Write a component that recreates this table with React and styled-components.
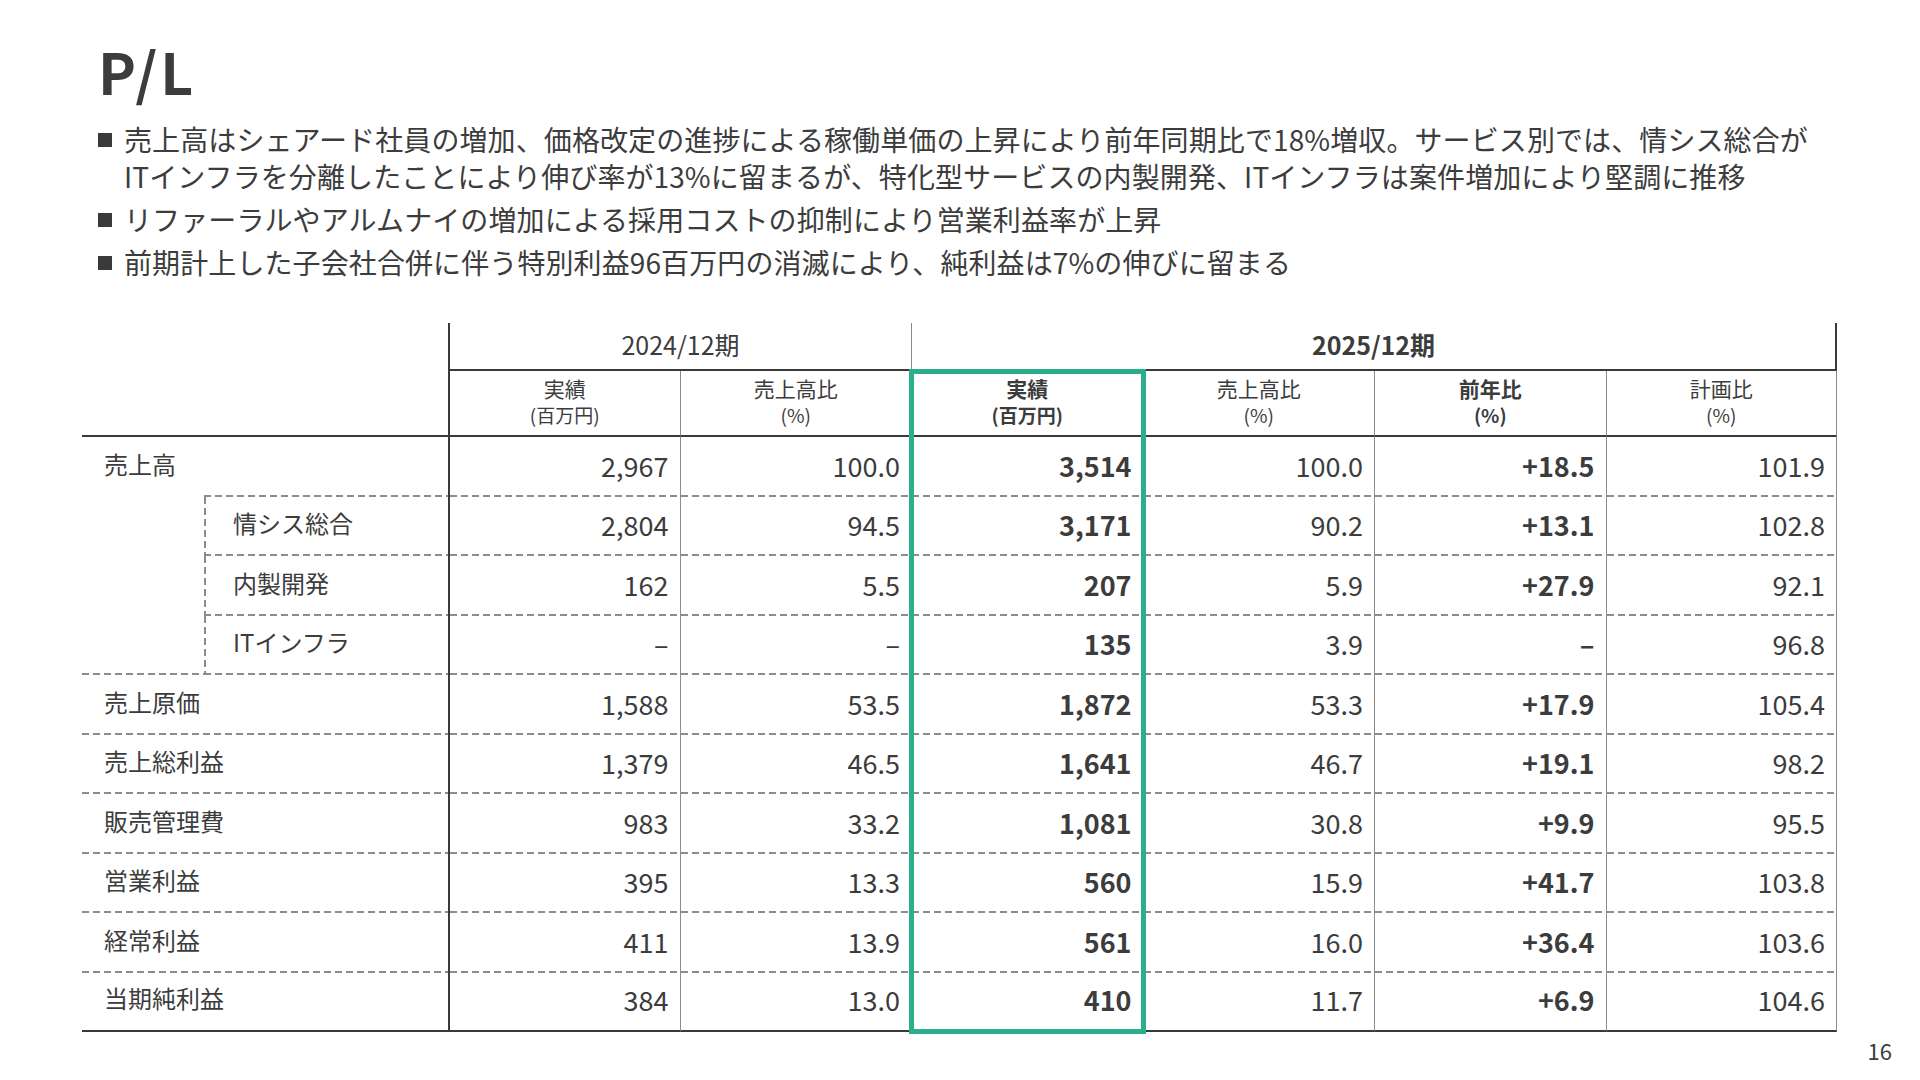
import React from 'react';
import styled, { createGlobalStyle } from 'styled-components';

const DARK = '#3a3a3a';
const GRAY = '#8c8c8c';
const GREEN = '#2bae8c';
const TEXT = '#3c3c3c';

const GlobalStyle = createGlobalStyle`
    html, body {
        margin: 0;
        padding: 0;
        background: #fff;
    }
    body {
        font-family: "Noto Sans CJK JP", "Noto Sans", sans-serif;
        color: ${TEXT};
    }
`;

const bullets = [
    ['売上高はシェアード社員の増加、価格改定の進捗による稼働単価の上昇により前年同期比で18%増収。サービス別では、情シス総合が',
        'ITインフラを分離したことにより伸び率が13%に留まるが、特化型サービスの内製開発、ITインフラは案件増加により堅調に推移'],
    ['リファーラルやアルムナイの増加による採用コストの抑制により営業利益率が上昇'],
    ['前期計上した子会社合併に伴う特別利益96百万円の消滅により、純利益は7%の伸びに留まる'],
];

const headers = [
    { top: '実績', sub: '(百万円)' },
    { top: '売上高比', sub: '(%)' },
    { top: '実績', sub: '(百万円)', bold: true },
    { top: '売上高比', sub: '(%)' },
    { top: '前年比', sub: '(%)', bold: true },
    { top: '計画比', sub: '(%)' },
];

const rows = [
    { label: '売上高', values: ['2,967', '100.0', '3,514', '100.0', '+18.5', '101.9'], parent: true },
    { label: '情シス総合', values: ['2,804', '94.5', '3,171', '90.2', '+13.1', '102.8'], child: true },
    { label: '内製開発', values: ['162', '5.5', '207', '5.9', '+27.9', '92.1'], child: true },
    { label: 'ITインフラ', values: ['–', '–', '135', '3.9', '–', '96.8'], child: true, lastChild: true },
    { label: '売上原価', values: ['1,588', '53.5', '1,872', '53.3', '+17.9', '105.4'] },
    { label: '売上総利益', values: ['1,379', '46.5', '1,641', '46.7', '+19.1', '98.2'] },
    { label: '販売管理費', values: ['983', '33.2', '1,081', '30.8', '+9.9', '95.5'] },
    { label: '営業利益', values: ['395', '13.3', '560', '15.9', '+41.7', '103.8'] },
    { label: '経常利益', values: ['411', '13.9', '561', '16.0', '+36.4', '103.6'] },
    { label: '当期純利益', values: ['384', '13.0', '410', '11.7', '+6.9', '104.6'] },
];

const boldCols = [2, 4];

const dashH = `repeating-linear-gradient(90deg, ${GRAY} 0 7px, transparent 7px 11px)`;
const dashV = `repeating-linear-gradient(180deg, ${GRAY} 0 7px, transparent 7px 11px)`;

const lineFor = (kind) => {
    if (kind === 'dark') return `2px solid ${DARK}`;
    if (kind === 'gray') return `1px solid ${GRAY}`;
    return 'none';
};

const dashBackground = ({ $bottom, $left }) => {
    const images = [];
    const positions = [];
    const sizes = [];
    if ($bottom === 'dash') {
        images.push(dashH);
        positions.push('left bottom');
        sizes.push('100% 2px');
    }
    if ($left === 'dash') {
        images.push(dashV);
        positions.push('left top');
        sizes.push('2px 100%');
    }
    if (!images.length) return '';
    return `
        background-image: ${images.join(', ')};
        background-position: ${positions.join(', ')};
        background-size: ${sizes.join(', ')};
        background-repeat: no-repeat;
    `;
};

const Page = styled.div`
    width: 1920px;
    height: 1080px;
    box-sizing: border-box;
    padding: 38px 0 0 82px;
    display: flex;
    flex-direction: column;
    overflow: hidden;
`;

const Title = styled.h1`
    margin: 0 0 19px 16px;
    font-size: 57px;
    line-height: 64px;
    font-weight: 700;
    letter-spacing: 3px;
    color: ${TEXT};
`;

const BulletList = styled.ul`
    list-style: none;
    margin: 0 0 42px 16px;
    padding: 0;
    display: flex;
    flex-direction: column;
    gap: 6px;
`;

const BulletItem = styled.li`
    display: flex;
    align-items: flex-start;
    font-size: 28px;
    line-height: 37px;
    letter-spacing: 0.1px;
    white-space: nowrap;
`;

const Square = styled.span`
    flex: none;
    width: 14px;
    height: 14px;
    margin: 12px 12px 0 0;
    background: ${DARK};
`;

const Table = styled.div`
    display: grid;
    width: 1755px;
    grid-template-columns: 122px 244px repeat(6, 231.5px);
    grid-template-rows: 48px 66px repeat(10, 59.5px);
`;

const Cell = styled.div`
    grid-column: ${p => p.$col};
    grid-row: ${p => p.$row};
    box-sizing: border-box;
    display: flex;
    align-items: center;
    justify-content: ${p => (p.$align === 'right' ? 'flex-end' : p.$align === 'center' ? 'center' : 'flex-start')};
    padding: ${p => p.$pad || '0'};
    border-left: ${p => lineFor(p.$left)};
    border-right: ${p => lineFor(p.$right)};
    border-bottom: ${p => (p.$bottom === 'solid' ? `2px solid ${DARK}` : 'none')};
    ${dashBackground}
    white-space: nowrap;
`;

const YearText = styled.span`
    font-size: 25px;
    font-weight: ${p => (p.$bold ? 700 : 400)};
`;

const HeadText = styled.div`
    display: flex;
    flex-direction: column;
    align-items: center;
    font-weight: ${p => (p.$bold ? 700 : 400)};
    font-size: 21px;
    line-height: 27px;
`;

const HeadSub = styled.span`
    font-size: 19px;
    line-height: 25px;
`;

const Label = styled.span`
    font-size: 24px;
`;

const Value = styled.span`
    font-size: 27px;
    font-weight: ${p => (p.$bold ? 700 : 400)};
`;

const GreenFrame = styled.div`
    grid-column: 5;
    grid-row: 2 / -1;
    margin: -2px -3px -2px -2px;
    border: 5px solid ${GREEN};
    pointer-events: none;
    z-index: 2;
`;

const Footer = styled.div`
    display: flex;
    justify-content: flex-end;
    padding-right: 28px;
    margin-top: 5px;
    font-size: 22px;
    line-height: 26px;
`;

export default function App() {
    return (
        <>
            <GlobalStyle />
            <Page>
                <Title>P/L</Title>
                <BulletList>
                    {bullets.map((lines, i) => (
                        <BulletItem key={i}>
                            <Square />
                            <span>
                                {lines.map((line, j) => (
                                    <React.Fragment key={j}>
                                        {j > 0 && <br />}
                                        {line}
                                    </React.Fragment>
                                ))}
                            </span>
                        </BulletItem>
                    ))}
                </BulletList>

                <Table>
                    <Cell $col="3 / 5" $row={1} $left="dark" $bottom="solid" $align="center" $pad="0 0 4px 0">
                        <YearText>2024/12期</YearText>
                    </Cell>
                    <Cell $col="5 / 9" $row={1} $left="gray" $right="dark" $bottom="solid" $align="center" $pad="0 0 4px 0">
                        <YearText $bold>2025/12期</YearText>
                    </Cell>

                    <Cell $col="1 / 3" $row={2} $bottom="solid" />
                    {headers.map((h, i) => (
                        <Cell
                            key={`h${i}`}
                            $col={i + 3}
                            $row={2}
                            $left={i === 0 ? 'dark' : 'gray'}
                            $right={i === 5 ? 'gray' : undefined}
                            $bottom="solid"
                            $align="center"
                            $pad="0 0 5px 0"
                        >
                            <HeadText $bold={h.bold}>
                                <span>{h.top}</span>
                                <HeadSub>{h.sub}</HeadSub>
                            </HeadText>
                        </Cell>
                    ))}

                    {rows.map((r, ri) => {
                        const row = ri + 3;
                        const isLast = ri === rows.length - 1;
                        const bottom = isLast ? 'solid' : 'dash';
                        let labelCells;
                        if (r.parent) {
                            labelCells = [
                                <Cell key="a" $col={1} $row={row} $pad="0 0 7px 22px">
                                    <Label>{r.label}</Label>
                                </Cell>,
                                <Cell key="b" $col={2} $row={row} $bottom="dash" />,
                            ];
                        } else if (r.child) {
                            labelCells = [
                                <Cell key="a" $col={1} $row={row} $bottom={r.lastChild ? 'dash' : undefined} />,
                                <Cell key="b" $col={2} $row={row} $left="dash" $bottom="dash" $pad="0 0 7px 29px">
                                    <Label>{r.label}</Label>
                                </Cell>,
                            ];
                        } else {
                            labelCells = [
                                <Cell key="a" $col="1 / 3" $row={row} $bottom={bottom} $pad="0 0 7px 22px">
                                    <Label>{r.label}</Label>
                                </Cell>,
                            ];
                        }
                        return (
                            <React.Fragment key={r.label}>
                                {labelCells}
                                {r.values.map((v, ci) => (
                                    <Cell
                                        key={ci}
                                        $col={ci + 3}
                                        $row={row}
                                        $left={ci === 0 ? 'dark' : 'gray'}
                                        $right={ci === 5 ? 'gray' : undefined}
                                        $bottom={bottom}
                                        $align="right"
                                        $pad="0 11px 3px 0"
                                    >
                                        <Value $bold={boldCols.includes(ci)}>{v}</Value>
                                    </Cell>
                                ))}
                            </React.Fragment>
                        );
                    })}

                    <GreenFrame />
                </Table>

                <Footer>16</Footer>
            </Page>
        </>
    );
}
